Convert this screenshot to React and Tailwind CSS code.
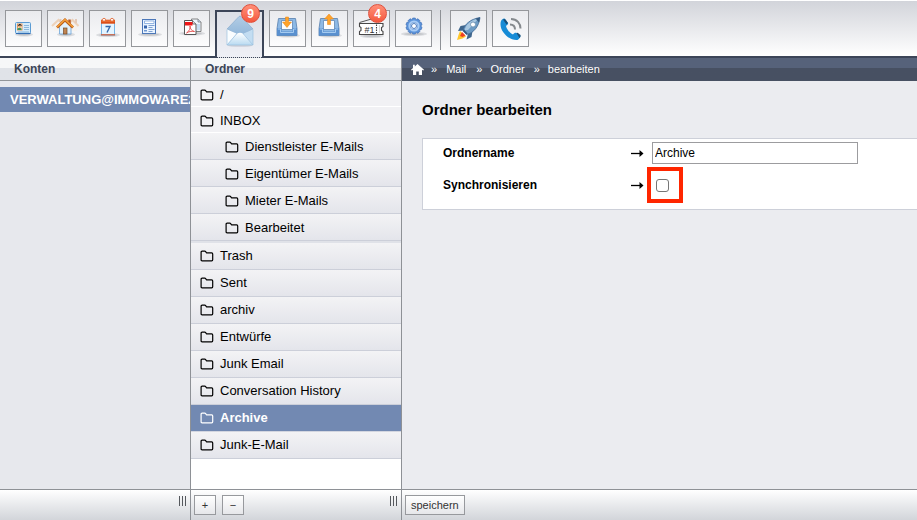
import React from "react";

function Glyph({ children }) {
  return (
    <svg viewBox="1 1 35 35" className="block h-full w-full" aria-hidden="true">
      {children}
    </svg>
  );
}

function Shadow({ y = 25, rx = 12 }) {
  return (
    <g fill="#8c9096">
      <ellipse cx="19" cy={y} rx={rx} ry="2" opacity="0.25" />
      <ellipse cx="19" cy={y} rx={rx - 3} ry="1.2" opacity="0.3" />
    </g>
  );
}

function CardIcon() {
  return (
    <Glyph>
      <Shadow y={24.5} rx={9} />
      <rect x="10.5" y="12.5" width="15" height="11" rx="1" fill="#d5ecfb" stroke="#5b9bd3" />
      <path d="M11 23.5h14.500" stroke="#2f6db5" strokeWidth="1.2" />
      <rect x="12.500" y="14" width="4.500" height="6" fill="#fff" stroke="#e9873a" strokeWidth="0.8" />
      <path d="M12.500 20v-1.500l2-1 2 1V20z" fill="#3c9460" />
      <circle cx="14.700" cy="16.500" r="1.500" fill="#edb27a" />
      <path d="M12.800 16.500c0-3.500 4-3.500 4 0l-1-1h-2z" fill="#111" />
      <path d="M19 15.500h5M19 17.500h5M19 19.500h5M13 22h11" stroke="#7aa9d4" strokeWidth="0.8" />
    </Glyph>
  );
}

function HouseIcon() {
  return (
    <Glyph>
      <Shadow y={24.500} rx={9} />
      <g opacity="0.3">
        <path d="M7 15l5-4 5 4v6H7zM20 15l5-4 5 4v6H20z" fill="#fff0df" />
        <path d="M5 16l6.500-6 6 6M19 16l6.500-6 6 6" fill="none" stroke="#e88d39" strokeWidth="2" />
        <path d="M29 9v4M13.500 9v3" stroke="#c87539" strokeWidth="2" />
      </g>
      <path d="M12.500 16l5.500-5 6 5v8H12.500z" fill="#e1f1fc" stroke="#6ca5d9" strokeWidth="0.8" />
      <path d="M22.500 9.500v5" stroke="#b85a29" strokeWidth="2.500" />
      <path d="M10 17.500l8-7.500 8 7.500" fill="none" stroke="#b95a17" strokeWidth="2.800" />
      <path d="M10 17l8-7.500 8 7.500" fill="none" stroke="#f5a13a" strokeWidth="1.600" />
      <rect x="16.500" y="18" width="3.500" height="6" fill="#bf8452" stroke="#7a4a24" strokeWidth="0.7" />
    </Glyph>
  );
}

function CalendarIcon() {
  return (
    <Glyph>
      <Shadow />
      <rect x="12.500" y="11" width="13" height="14" fill="#e4f4ff" stroke="#76b4e5" />
      <path d="M12 9.700h14v4H12z" fill="#dc4d16" />
      <path d="M12.500 11h13" stroke="#f48a4b" strokeWidth="1" />
      <circle cx="15" cy="9.800" r="1.500" fill="#fff" stroke="#dc5a25" strokeWidth="0.8" />
      <circle cx="23" cy="9.800" r="1.500" fill="#fff" stroke="#dc5a25" strokeWidth="0.8" />
      <path d="M12 24.800h14" stroke="#cf5a35" strokeWidth="1.200" />
      <path d="M16.500 16.500h4.500l-3 6" fill="none" stroke="#3569ab" strokeWidth="1.400" />
    </Glyph>
  );
}

function NewsIcon() {
  return (
    <Glyph>
      <Shadow y={24.500} />
      <rect x="11.500" y="9.500" width="13" height="14" fill="#eaf4ff" stroke="#4c77b8" />
      <path d="M13.500 11h9.500v2.500h-9.500z" fill="#fff" stroke="#7ba4dc" strokeWidth="0.8" />
      <path d="M13 15.500h3v3h-3z" fill="#3866ae" />
      <path d="M13 20h3v1.500h-3z" fill="#6e96cf" />
      <path d="M17.500 15.500h6M17.500 17.500h4M17.500 19.500h6M17.500 21.500h4" stroke="#7399ce" strokeWidth="0.9" />
    </Glyph>
  );
}

function PdfIcon() {
  return (
    <Glyph>
      <Shadow y={23.500} rx={13} />
      <path d="M18.500 9h6.500l3 3v9.500h-9.500z" fill="#edf5fc" stroke="#777" strokeWidth="0.9" />
      <path d="M25 9v3h3" fill="#c4dcf0" stroke="#777" strokeWidth="0.7" />
      <path d="M24 14h3v6h-3z" fill="#c8def1" />
      <path d="M11.500 10.500h8l3.500 3.500v10.500H11.500z" fill="#fff" stroke="#555" />
      <path d="M19.500 10.500V14H23" fill="#ddd" stroke="#555" strokeWidth="0.8" />
      <path d="M12 12h7.500v3.500H12z" fill="#ef1717" />
      <path d="M13.500 23c3-2 4-5 3.500-7 0 3 2 5 4.500 5.500-3-.5-6 0-8 1.500z" fill="none" stroke="#e24b4b" strokeWidth="0.9" />
    </Glyph>
  );
}

function MailIcon() {
  return (
    <svg viewBox="0 0 28 32" className="h-8 w-7" aria-hidden="true">
      <defs>
        <linearGradient id="flap" x1="0" y1="0" x2="0" y2="1">
          <stop offset="0" stopColor="#b3cde5" />
          <stop offset="1" stopColor="#94b8da" />
        </linearGradient>
        <linearGradient id="front" x1="0" y1="0" x2="0" y2="1">
          <stop offset="0" stopColor="#ffffff" />
          <stop offset="1" stopColor="#b9daf1" />
        </linearGradient>
      </defs>
      <ellipse cx="14" cy="30.500" rx="12.500" ry="1.300" fill="#9fa6b4" opacity="0.4" />
      <path d="M1 14L13 1.500q1-.8 2 0L27 14l-9 5h-8z" fill="url(#flap)" stroke="#8fb0d0" strokeWidth="0.8" />
      <path d="M1 14.500V30l9.500-11.500z" fill="#fafdff" />
      <path d="M27 14.500V30l-9.500-11.500z" fill="#c3ddf2" />
      <path d="M1 30l10-11.500q3-1.500 6 0L27 30z" fill="url(#front)" />
      <path d="M1 30l10-11.500M27 30L17 18.500" fill="none" stroke="#93bddf" strokeWidth="0.7" />
      <path d="M1 14.500V30h26V14.500" fill="none" stroke="#9cc2e0" strokeWidth="0.7" />
    </svg>
  );
}

function TrayIcon({ up }) {
  return (
    <Glyph>
      <Shadow y={25.500} rx={12} />
      <path d="M9.500 8.500h17l1.500 10v7H8v-7z" fill="#8db9e5" stroke="#6288b3" strokeWidth="0.9" />
      <path d="M12.500 10.500h11v9h-11z" fill="#fbfdff" stroke="#6288b3" strokeWidth="0.8" />
      <path d="M8 18h4.500v3.500h11V18H28v7.500H8z" fill="#5990cf" />
      <path d="M9 19h2.500v3.500h13V19H27" fill="none" stroke="#a5cbf0" strokeWidth="1" />
      {up ? (
        <path d="M18 4l4.500 5h-3v5.500h-3V9h-3z" fill="#ffa32a" stroke="#e48416" strokeWidth="0.5" />
      ) : (
        <path d="M16.500 7h3v5h3L18 17.500 13.500 12h3z" fill="#ffa32a" stroke="#e48416" strokeWidth="0.5" />
      )}
    </Glyph>
  );
}

function TicketIcon() {
  return (
    <Glyph>
      <Shadow y={26} />
      <path d="M6.500 12.500L18.500 9" stroke="#555" strokeWidth="1" />
      <path d="M6.500 13.500h23.500v3l-1.500 1v3l1.500 1v3H6.500v-3l1.500-1v-3l-1.500-1z" fill="#fff" stroke="#484848" strokeWidth="1.100" />
      <path d="M23.500 14.500v9.500" stroke="#444" strokeWidth="1.100" strokeDasharray="1.500 1" />
      <path d="M26.500 15.500v7" stroke="#999" strokeWidth="0.8" strokeDasharray="1 1" />
      <text x="11.500" y="22.500" fontSize="9" fill="#333" fontFamily="Liberation Sans, Arial, sans-serif">#1</text>
    </Glyph>
  );
}

function GearIcon() {
  const teeth = [0, 36, 72, 108, 144, 180, 216, 252, 288, 324];
  return (
    <Glyph>
      <Shadow y={24} rx={13} />
      <g fill="#5b91d8" stroke="#3569b4" strokeWidth="0.6">
        {teeth.map((angle) => (
          <rect key={angle} x="17.300" y="8" width="3.400" height="4" rx="0.8" transform={`rotate(${angle} 19 16)`} />
        ))}
      </g>
      <circle cx="19" cy="16" r="5" fill="none" stroke="#5f99df" strokeWidth="3" />
      <circle cx="19" cy="16" r="4.700" fill="none" stroke="#a9ccf5" strokeWidth="1.800" />
      <circle cx="19" cy="16" r="2.500" fill="#fff" stroke="#376db9" strokeWidth="0.9" />
    </Glyph>
  );
}

function RocketIcon() {
  return (
    <Glyph>
      <path d="M10 21l6 5.500-3.500 2L7 30l1.500-5z" fill="#ffc72b" />
      <path d="M12 22l3.500 3.500-3 1.500-2.500-1z" fill="#ef3e23" />
      <path d="M16 15l-5.500 1-2.500 5 6-.5zM22.500 21l-1 6-5 2.500 1.500-6z" fill="#3f668d" />
      <path d="M13 21c1-7 8-12 17-13.500C29 16 24 23 16.500 24.500z" fill="#6d9bc4" stroke="#426b95" strokeWidth="0.8" />
      <path d="M14.500 20.500C16 14 21 10 28.500 8.500L18 20z" fill="#a9c8e1" />
      <path d="M25.500 8.500l4.500-1-1 5z" fill="#365c84" />
      <path d="M13.500 20l3.500 4" stroke="#36577b" strokeWidth="1.500" />
      <circle cx="23" cy="14.500" r="2.500" fill="#fff" stroke="#7295b5" strokeWidth="0.9" />
    </Glyph>
  );
}

function PhoneIcon() {
  return (
    <Glyph>
      <path d="M9 11c1-2 3-3 4-2l3 4c.5 1-.5 2-2 3 1 4 4 7 7 8.500 1-1.500 2.500-2 3.500-1.500l3.500 2.500c1 1-.5 3.500-2.500 4.500C17 31 6 20 9 11z" fill="#168bd6" />
      <path d="M11 9.500q1.500-1 2.500 0l2.500 3.500-1.500 1.500zM24.500 23q1-.5 1.500 0l2.500 2q.5 1.500-1 3z" fill="#174f79" />
      <path d="M18 14.500c3 0 5 2 5 5M19 9c6 0 9.500 4.500 9.500 9.500" fill="none" stroke="#85898d" strokeWidth="2" />
    </Glyph>
  );
}

function FolderIcon() {
  return (
    <svg viewBox="0 0 14 12" className="h-3 w-3.5 shrink-0" fill="none" stroke="currentColor" strokeWidth="1.200" strokeLinejoin="round" aria-hidden="true">
      <path d="M1.100 9.800V2.200q0-1 1-1h2.700q.5 0 .8.400l1 1.300h5.100q1 0 1 1v5.900q0 1-1 1H2.100q-1 0-1-1z" />
    </svg>
  );
}

function Badge({ children, className }) {
  return (
    <span className={`absolute flex h-[19px] w-[19px] items-center justify-center rounded-full border border-[#e0503c] bg-linear-to-b from-[#ff8f78] to-[#f4573d] text-[12px] leading-none font-bold text-white ${className}`}>
      {children}
    </span>
  );
}

function Tool({ label, badge, children }) {
  return (
    <button type="button" aria-label={label} className="relative h-[37px] w-[37px] shrink-0 border border-[#95979b] bg-linear-to-b from-[#eaebee] to-[#fcfcfd]">
      {children}
      {badge && <Badge className="-top-[7px] right-[2px]">{badge}</Badge>}
    </button>
  );
}

function Grip() {
  return (
    <svg viewBox="0 0 8 11" className="mt-px ml-auto h-[11px] w-2 self-start" aria-hidden="true">
      <path d="M.5 0v10M3.500 0v10M6.500 0v10" stroke="#55585d" strokeWidth="1" />
    </svg>
  );
}

function Footer({ children, className = "" }) {
  return (
    <footer className={`flex h-[31px] shrink-0 items-start border-t border-[#8e9196] bg-linear-to-b from-white to-[#d2d5da] pt-[5px] ${className}`}>
      {children}
    </footer>
  );
}

const smallButton = "h-5 border border-[#97999d] bg-linear-to-b from-white to-[#e6e7ea] text-[11px] leading-none text-[#333]";
const columnHeader = "h-[23px] shrink-0 border-b border-[#929599] bg-linear-to-b from-[#f6f7f8] from-45% to-[#e0e3e8] to-45% px-3.5 text-[12px] leading-[22px] font-bold text-[#3b4556]";

const children = ["Dienstleister E-Mails", "Eigentümer E-Mails", "Mieter E-Mails", "Bearbeitet"];
const folders = ["Trash", "Sent", "archiv", "Entwürfe", "Junk Email", "Conversation History", "Archive", "Junk-E-Mail"];

function Folder({ name, nested, plain, active }) {
  const look = plain
    ? "h-[26px] border-white bg-[#f1f1f4] pt-0.5"
    : active
      ? "h-[27px] border-[#d3d6e0] bg-[#7289b2] font-bold text-white"
      : "h-[27px] border-[#cccfd9] bg-linear-to-b from-[#f3f3f5] to-[#e4e5eb]";
  return (
    <li>
      <a href="#folder" className={`flex items-center gap-1.5 border-b text-[13px] leading-5 ${nested ? "pt-px pl-[34px]" : "pl-[9px]"} ${look}`}>
        <FolderIcon />
        <span>{name}</span>
      </a>
    </li>
  );
}

function Arrow() {
  return (
    <svg viewBox="0 0 13 9" className="h-[9px] w-[13px]" aria-hidden="true">
      <path d="M0 4.500h10" stroke="#000" strokeWidth="1.300" />
      <path d="M8.500 1l4 3.500-4 3.500z" fill="#000" />
    </svg>
  );
}

export default function App() {
  return (
    <div className="flex h-screen flex-col overflow-hidden bg-[#ebecf0] font-['Liberation_Sans',Arial,sans-serif] text-black">
      <nav className="flex h-[58px] shrink-0 items-start gap-[5px] border-t border-b-2 border-t-white border-b-[#3c4558] bg-linear-to-b from-[#d2d4da] to-white pt-[9px] pl-[5px]">
        <Tool label="Kontakte"><CardIcon /></Tool>
        <Tool label="Objekte"><HouseIcon /></Tool>
        <Tool label="Kalender"><CalendarIcon /></Tool>
        <Tool label="Berichte"><NewsIcon /></Tool>
        <Tool label="Dokumente"><PdfIcon /></Tool>
        <button type="button" aria-label="Mail" className="relative -mb-0.5 flex w-[49px] shrink-0 items-start justify-center self-stretch border-2 border-b border-[#3c4558] border-b-[#3c4558] bg-linear-to-b from-[#dcdfe6] to-[#eff0f6] pt-[3px] [border-bottom-style:dotted]">
          <MailIcon />
          <Badge className="-top-[8px] right-[2px]">9</Badge>
        </button>
        <Tool label="Eingang"><TrayIcon /></Tool>
        <Tool label="Ausgang"><TrayIcon up /></Tool>
        <Tool label="Tickets" badge="4"><TicketIcon /></Tool>
        <Tool label="Einstellungen"><GearIcon /></Tool>
        <span className="mr-1 ml-[3px] h-10 w-px bg-[#8e9196]" />
        <Tool label="Start"><RocketIcon /></Tool>
        <Tool label="Telefon"><PhoneIcon /></Tool>
      </nav>

      <div className="flex min-h-0 flex-1">
        <section className="flex w-[191px] shrink-0 flex-col border-r border-[#8e9196] bg-[#e7e8ed]">
          <h2 className={columnHeader}>Konten</h2>
          <div className="min-h-0 flex-1 pt-1.5">
            <a href="#konto" className="block overflow-hidden bg-[#7289b2] pl-2.5 text-[13px] leading-[25px] font-bold whitespace-nowrap text-white">
              VERWALTUNG@IMMOWARE24
            </a>
          </div>
          <Footer className="pr-[3px]"><Grip /></Footer>
        </section>

        <section className="flex w-[211px] shrink-0 flex-col border-r border-[#8e9196] bg-white">
          <h2 className={columnHeader}>Ordner</h2>
          <ul className="min-h-0 flex-1 overflow-hidden">
            <Folder name="/" plain />
            <Folder name="INBOX" plain />
            <li>
              <ul className="border-b-2 border-[#e0e2e8]">
                {children.map((name) => <Folder key={name} name={name} nested />)}
              </ul>
            </li>
            {folders.map((name) => <Folder key={name} name={name} active={name === "Archive"} />)}
          </ul>
          <Footer className="gap-1.5 pr-[3px] pl-[3px]">
            <button type="button" aria-label="Ordner hinzufügen" className={`w-[22px] ${smallButton}`}>+</button>
            <button type="button" aria-label="Ordner entfernen" className={`w-[22px] ${smallButton}`}>−</button>
            <Grip />
          </Footer>
        </section>

        <main className="flex min-w-0 flex-1 flex-col">
          <nav className="flex h-[23px] shrink-0 items-center bg-linear-to-b from-[#56627a] from-45% to-[#475062] to-45% pl-[9px] text-[11px] leading-none text-white">
            <a href="#start" aria-label="Start">
              <svg viewBox="0 0 13 11" className="h-[11px] w-[13px]" fill="#fff" aria-hidden="true">
                <path d="M6.500 0L13 5.700l-.8.900-1.200-.9V11H7.800V7.500H5.200V11H2V5.700l-1.200.9L0 5.700 2 4V.8h1.800v1.600z" />
              </svg>
            </a>
            <span className="ml-[7px]">»</span>
            <a href="#mail" className="ml-[9px]">Mail</a>
            <span className="ml-[10px]">»</span>
            <a href="#ordner" className="ml-2">Ordner</a>
            <span className="ml-[9px]">»</span>
            <span className="ml-2">bearbeiten</span>
          </nav>

          <form id="folder-form" className="min-h-0 flex-1 pl-5">
            <h1 className="pt-[19px] text-[15px] leading-5 font-bold">Ordner bearbeiten</h1>
            <div className="mt-[18px] border border-r-0 border-[#cdd0d9] bg-white pl-5 text-[12px] font-bold">
              <div className="flex h-7 items-center">
                <label htmlFor="name" className="w-[188px]">Ordnername</label>
                <Arrow />
                <input id="name" type="text" defaultValue="Archive" className="ml-2 h-[22px] w-[206px] border border-[#9c9c9f] px-0.5 text-[12px] font-normal" />
              </div>
              <div className="flex h-[42px] items-start">
                <label htmlFor="sync" className="w-[188px] pt-2.5 leading-4">Synchronisieren</label>
                <span className="pt-3.5"><Arrow /></span>
                <span className="ml-[3px] flex h-9 w-[36px] items-center border-4 border-[#ff2600] pl-[5px]">
                  <input id="sync" type="checkbox" className="h-[13px] w-[13px] appearance-none rounded-[3px] border border-[#767676] bg-white" />
                </span>
              </div>
            </div>
          </form>

          <Footer className="pl-[3px]">
            <button type="submit" form="folder-form" className={`px-[5px] ${smallButton}`}>speichern</button>
          </Footer>
        </main>
      </div>
    </div>
  );
}
